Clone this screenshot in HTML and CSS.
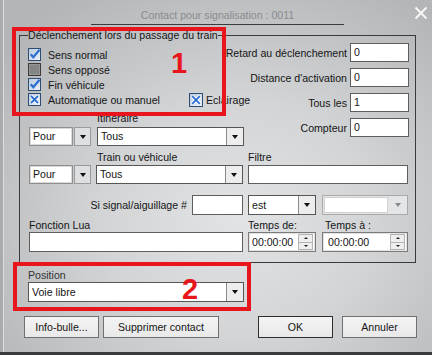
FILE: index.html
```html
<!DOCTYPE html>
<html lang="fr">
<head>
<meta charset="utf-8">
<title>Contact pour signalisation</title>
<link rel="stylesheet" href="styles.css">
</head>
<body>
<div class="window">
  <div class="titlebar">
    <div class="title">Contact pour signalisation : 0011</div>
    <svg class="close" width="14" height="14" viewBox="0 0 14 14"><path d="M1.5 1.5L12.5 12.5M12.5 1.5L1.5 12.5" stroke="#f6f6f6" stroke-width="2" fill="none"/></svg>
  </div>

  <fieldset class="group">
    <legend>Déclenchement lors du passage du train</legend>
    <div class="top">
      <div class="left">
        <div class="checks">
          <div class="chk">
            <svg class="cb" width="13" height="13" viewBox="0 0 13 13"><defs><linearGradient id="gb" x1="0" y1="0" x2="1" y2="1"><stop offset="0" stop-color="#b9c9dc"/><stop offset="1" stop-color="#eef3f8"/></linearGradient></defs><rect x="0.5" y="0.5" width="12" height="12" fill="url(#gb)" stroke="#2f4d73"/><path d="M2.8 6.2L5.3 9.3L11.5 1.8" fill="none" stroke="#2c6fd1" stroke-width="2.2"/></svg>
            <span>Sens normal</span>
          </div>
          <div class="chk">
            <svg class="cb" width="13" height="13" viewBox="0 0 13 13"><rect x="0.5" y="0.5" width="12" height="12" fill="#858585" stroke="#3a3a3a"/><rect x="1.5" y="1.5" width="10" height="10" fill="none" stroke="#979797"/></svg>
            <span>Sens opposé</span>
          </div>
          <div class="chk">
            <svg class="cb" width="13" height="13" viewBox="0 0 13 13"><rect x="0.5" y="0.5" width="12" height="12" fill="url(#gb)" stroke="#2f4d73"/><path d="M2.8 6.2L5.3 9.3L11.5 1.8" fill="none" stroke="#2c6fd1" stroke-width="2.2"/></svg>
            <span>Fin véhicule</span>
          </div>
          <div class="chk">
            <span class="chk auto">
              <svg class="cb" width="13" height="13" viewBox="0 0 13 13"><rect x="0.5" y="0.5" width="12" height="12" fill="url(#gb)" stroke="#2f4d73"/><path d="M3 3L10 10M10 3L3 10" stroke="#ffffff" stroke-width="3.4" fill="none"/><path d="M3 3L10 10M10 3L3 10" stroke="#2c6fd1" stroke-width="1.8" fill="none"/></svg>
              <span>Automatique ou manuel</span>
            </span>
            <span class="chk eclair">
              <svg class="cb" width="14" height="14" viewBox="0 0 14 14"><rect x="0.5" y="0.5" width="13" height="13" fill="url(#gb)" stroke="#2f4d73"/><path d="M3.2 3.2L10.8 10.8M10.8 3.2L3.2 10.8" stroke="#ffffff" stroke-width="3.4" fill="none"/><path d="M3.2 3.2L10.8 10.8M10.8 3.2L3.2 10.8" stroke="#2c6fd1" stroke-width="1.8" fill="none"/></svg>
              <span>Eclairage</span>
            </span>
          </div>
        </div>
        <div class="lbl itin">Itinéraire</div>
        <div class="combo-row">
          <div class="pour"><div class="pfield">Pour</div><div class="pbtn"><i class="tri"></i></div></div>
          <div class="combo w147"><div class="cfield">Tous</div><div class="cbtn"><i class="tri"></i></div></div>
        </div>
      </div>
      <div class="right">
        <div class="frow"><span class="flbl">Retard au déclenchement</span><div class="input num">0</div></div>
        <div class="frow"><span class="flbl">Distance d'activation</span><div class="input num">0</div></div>
        <div class="frow"><span class="flbl">Tous les</span><div class="input num">1</div></div>
        <div class="frow"><span class="flbl">Compteur</span><div class="input num">0</div></div>
      </div>
    </div>

    <div class="lblrow train-lbls">
      <span class="lbl l-train">Train ou véhicule</span>
      <span class="lbl">Filtre</span>
    </div>
    <div class="fieldrow train">
      <div class="pour"><div class="pfield">Pour</div><div class="pbtn"><i class="tri"></i></div></div>
      <div class="combo w147"><div class="cfield">Tous</div><div class="cbtn"><i class="tri"></i></div></div>
      <div class="input filtre"></div>
    </div>

    <div class="fieldrow signal">
      <span class="slbl">Si signal/aiguillage #</span>
      <div class="input sig"></div>
      <div class="combo w68 h20"><div class="cfield">est</div><div class="cbtn"><i class="tri"></i></div></div>
      <div class="dcombo"><div class="dfield"></div><div class="dbtn"><i class="tri gray"></i></div></div>
    </div>

    <div class="lblrow lua-lbls">
      <span class="lbl l-lua">Fonction Lua</span>
      <span class="lbl l-tde">Temps de:</span>
      <span class="lbl">Temps à :</span>
    </div>
    <div class="fieldrow lua">
      <div class="input lua-in"></div>
      <div class="spin w68"><span class="stext">00:00:00</span><div class="sbtns"><div class="sb"><i class="tup"></i></div><div class="sb"><i class="tdn"></i></div></div></div>
      <div class="spin w86"><span class="stext">00:00:00</span><div class="sbtns"><div class="sb"><i class="tup"></i></div><div class="sb"><i class="tdn"></i></div></div></div>
    </div>
  </fieldset>

  <div class="position">
    <div class="lbl pos-lbl">Position</div>
    <div class="combo w216 h20"><div class="cfield">Voie libre</div><div class="cbtn"><i class="tri"></i></div></div>
  </div>

  <div class="buttons">
    <button class="btn b-info">Info-bulle...</button>
    <button class="btn b-supp">Supprimer contact</button>
    <button class="btn b-ok">OK</button>
    <button class="btn b-ann">Annuler</button>
  </div>

  <div class="mark mark1"></div>
  <div class="num-mark n1">1</div>
  <div class="mark mark2"></div>
  <div class="num-mark n2">2</div>
</div>
</body>
</html>
```

FILE: styles.css
```css
* { box-sizing: border-box; }
html, body { margin: 0; padding: 0; }
body {
  font-family: "Liberation Sans", Arial, sans-serif;
  font-size: 10.6px;
  line-height: 12px;
  color: #151515;
}
.window {
  position: relative;
  width: 432px;
  height: 355px;
  overflow: hidden;
  background: radial-gradient(ellipse 70% 75% at 55% 62%, #e1e3e5 0%, #d2d4d6 45%, #b3b5b7 100%);
  border-bottom: 3px solid #3a3b3c;
  box-shadow: inset 3px 0 0 #a9abad, inset 4px 0 0 #dcdee0;
}
.titlebar {
  display: flex;
  align-items: flex-start;
  height: 25px;
}
.title {
  margin-left: 91px;
  width: 253px;
  padding-top: 9px;
  padding-bottom: 2px;
  line-height: 13px;
  text-align: center;
  color: #8a8c8f;
  border-bottom: 1px solid #3c3c3c;
}
.close {
  margin-left: auto;
  margin-right: 4px;
  margin-top: 6px;
}
.group {
  margin: 4px 0 0 19px;
  width: 397px;
  border: 1px solid #3a3a3a;
  padding: 2px 7px 10px 9px;
  min-width: 0;
}
.group legend {
  padding: 0;
  margin-left: -1px;
  line-height: 12px;
}
.top { display: flex; }
.left { width: 215px; padding-top: 4px; }
.right {
  width: 165px;
  display: flex;
  flex-direction: column;
  gap: 6px;
}
.checks { display: flex; flex-direction: column; }
.chk {
  display: flex;
  align-items: center;
  height: 15px;
  white-space: nowrap;
}
.chk .cb { flex: none; margin-right: 7px; margin-left: -1px; }
.chk.auto { width: 161px; flex: none; }
.chk.eclair { flex: none; }
.chk.eclair .cb { margin-right: 3px; }
.lbl { white-space: nowrap; line-height: 12px; }
.itin { display: block; margin: 5px 0 3px 68px; }
.combo-row { display: flex; gap: 6px; margin-left: 0; }

.frow {
  display: flex;
  justify-content: flex-end;
  align-items: center;
  gap: 3px;
  height: 19px;
}
.flbl { white-space: nowrap; }
.input {
  background: #fff;
  border: 1px solid #5e5e5e;
  height: 19px;
  padding-left: 3px;
  line-height: 17px;
}
.input.num { width: 59px; flex: none; }

.pour { display: flex; width: 62px; height: 19px; }
.pfield {
  width: 44px;
  background: #fff;
  border: 1px solid #8e8e8e;
  box-shadow: inset 0 0 0 1px #d9d9d9;
  padding-left: 3px;
  line-height: 17px;
}
.pbtn {
  margin-left: 1px;
  width: 17px;
  border: 1px solid #9a9a9a;
  background: #dedfe0;
  display: flex;
  align-items: center;
  justify-content: center;
}
.combo {
  display: flex;
  height: 19px;
  background: #fff;
  border: 1px solid #555;
}
.combo.h20 { height: 20px; }
.cfield { flex: 1; padding-left: 3px; line-height: 17px; }
.h20 .cfield { line-height: 18px; }
.cbtn {
  width: 17px;
  border-left: 1px solid #8a8a8a;
  background: #ededed;
  display: flex;
  align-items: center;
  justify-content: center;
}
.tri {
  width: 0; height: 0;
  border-left: 3.5px solid transparent;
  border-right: 3.5px solid transparent;
  border-top: 4px solid #111;
}
.tri.gray { border-top-color: #8a8a8a; }
.w147 { width: 147px; }
.w68 { width: 68px; }
.w86 { width: 86px; }
.w216 { width: 216px; }

.lblrow { display: flex; white-space: nowrap; }
.train-lbls { margin-top: 5px; height: 14px; }
.l-train { margin-left: 68px; width: 151px; }
.fieldrow { display: flex; }
.train .pour { margin-right: 5px; }
.train .combo { margin-right: 5px; }
.filtre { width: 160px; }

.signal { margin-top: 11px; height: 20px; align-items: center; }
.slbl { width: 158px; text-align: right; margin-right: 5px; white-space: nowrap; }
.sig { width: 51px; height: 20px; margin-right: 5px; }
.signal .combo { margin-right: 6px; }
.dcombo {
  display: flex;
  width: 86px;
  height: 20px;
  border: 1px solid #a9a9a9;
  background: #e4e5e6;
}
.dfield {
  flex: 1;
  background: #fff;
  border: 1px solid #d0d0d0;
  margin: 1px;
}
.dbtn {
  width: 18px;
  display: flex;
  align-items: center;
  justify-content: center;
}

.lua-lbls { margin-top: 4px; height: 13px; }
.l-lua { width: 219px; }
.l-tde { width: 77px; }
.lua-in { width: 214px; height: 20px; margin-right: 5px; }
.spin {
  display: flex;
  align-items: center;
  height: 20px;
  background: #fff;
  border: 1px solid #7a7a7a;
  box-shadow: inset 0 0 0 1px #e2e2e2;
  margin-right: 6px;
  padding: 1px 2px 1px 3px;
}
.spin.w86 { margin-right: 0; padding-left: 5px; }
.stext { flex: 1; line-height: 16px; }
.sbtns { display: flex; flex-direction: column; width: 15px; height: 16px; }
.sb {
  flex: 1;
  background: #eeeeee;
  border: 1px solid #b4b4b4;
  display: flex;
  align-items: center;
  justify-content: center;
}
.sb + .sb { border-top: none; }
.tup, .tdn {
  width: 0; height: 0;
  border-left: 2px solid transparent;
  border-right: 2px solid transparent;
}
.tup { border-bottom: 2px solid #222; }
.tdn { border-top: 2px solid #222; }

.position { margin: 6px 0 0 28px; }
.pos-lbl { color: #333; margin-bottom: 1px; }

.buttons {
  display: flex;
  margin: 14px 0 0 24px;
}
.btn {
  font-family: inherit;
  font-size: 10.6px;
  color: #151515;
  height: 22px;
  padding: 0;
  background: linear-gradient(#f4f4f4, #e8e8e8);
  border: 1px solid #707070;
  border-radius: 0;
}
.b-info { width: 75px; margin-right: 4px; }
.b-supp { width: 116px; margin-right: 39px; }
.b-ok { width: 75px; margin-right: 9px; border-color: #2e2e2e; }
.b-ann { width: 75px; }

.mark {
  position: absolute;
  border: 4px solid #e8161c;
}
.mark1 { left: 12px; top: 27px; width: 214px; height: 89px; }
.mark2 { left: 13px; top: 262px; width: 238px; height: 49px; }
.num-mark {
  position: absolute;
  font-family: "Liberation Sans", Arial, sans-serif;
  font-weight: bold;
  font-size: 29px;
  line-height: 29px;
  color: #e8161c;
}
.n1 { left: 171px; top: 49px; }
.n2 { left: 182px; top: 275px; }
```
